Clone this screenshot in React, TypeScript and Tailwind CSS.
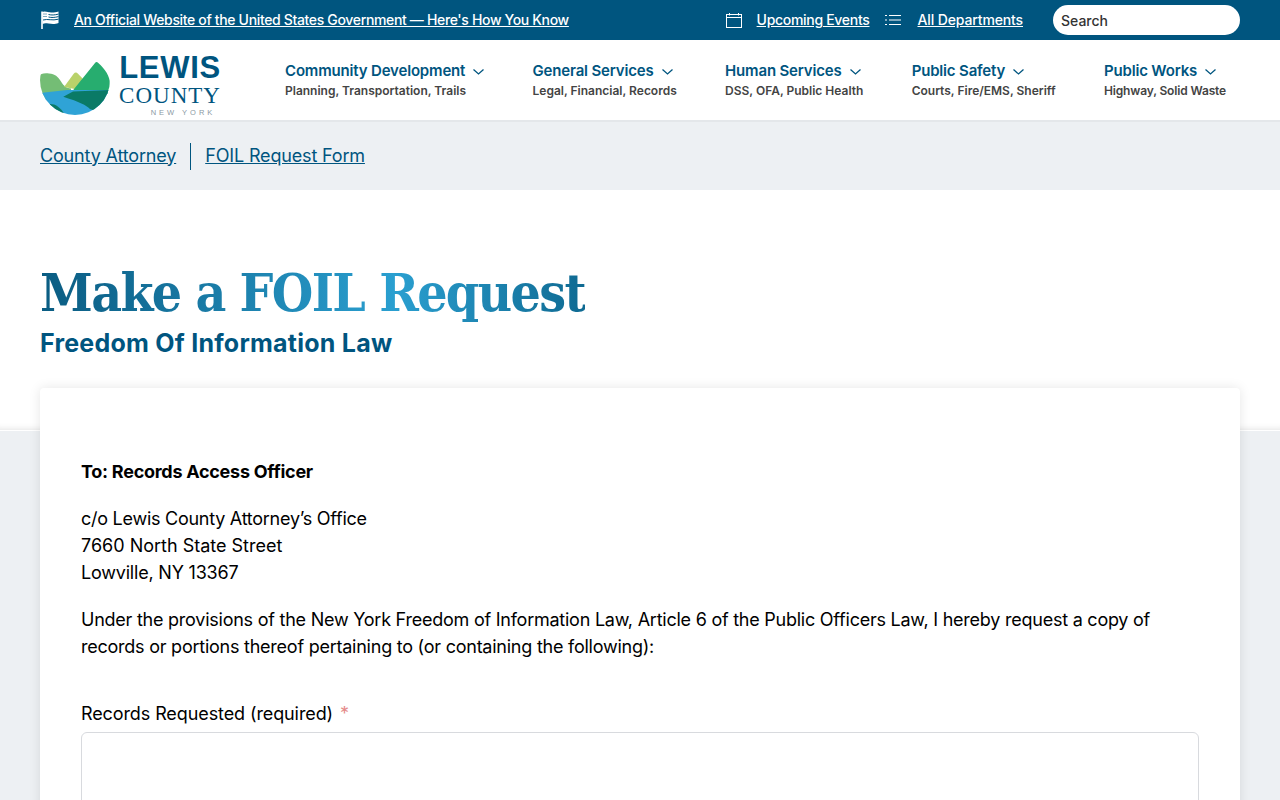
const sans = { fontFamily: "Inter, 'Noto Sans', sans-serif" };

const navItems = [
    { title: "Community Development", sub: "Planning, Transportation, Trails", subClass: "" },
    { title: "General Services", sub: "Legal, Financial, Records", subClass: "" },
    { title: "Human Services", sub: "DSS, OFA, Public Health", subClass: "" },
    { title: "Public Safety", sub: "Courts, Fire/EMS, Sheriff", subClass: "" },
    { title: "Public Works", sub: "Highway, Solid Waste", subClass: "tracking-[-0.15px]" },
];

function FlagIcon() {
    return (
        <svg width="20" height="20" viewBox="0 0 20 20" fill="none" stroke="white">
            <path d="M2 1.500V19" strokeWidth="1.600" />
            <path d="M2 2c2-1 4-.5 6 0s6 1 10.500-.5V13c-4 1.500-7 1-10 .5s-4-.5-6 .5z" fill="white" stroke="none" />
            <path d="M8.500 4.500c3 .8 6 .6 10-.4M8.500 7c3 .8 6 .6 10-.4M3 10c5-1.500 9 1 15.500-.8" stroke="#00557f" strokeWidth="1" />
            <path d="M3.500 4h4M3.500 6.500h4" stroke="#00557f" strokeWidth="1" strokeDasharray="1 1" />
        </svg>
    );
}

function CalendarIcon() {
    return (
        <svg width="16" height="15" viewBox="0 0 16 15" fill="none" stroke="white" strokeWidth="1">
            <rect x="0.500" y="1.500" width="15" height="13" />
            <path d="M0.500 4.500h15M3.500 0v2.500M12.500 0v2.500" />
        </svg>
    );
}

function ListIcon() {
    return (
        <svg width="16" height="12" viewBox="0 0 16 12" fill="none" stroke="white" strokeWidth="1">
            <path d="M4 1.500h12M4 6h12M4 10.500h12" />
            <path d="M0 1.500h2M0 6h2M0 10.500h2" />
        </svg>
    );
}

function Chevron() {
    return (
        <svg width="11" height="6" viewBox="0 0 11 6" fill="none" stroke="#00557f" strokeWidth="1.300" className="ml-[8px] mt-[2px]">
            <path d="M0.500 0.500 5.500 5l5-4.500" />
        </svg>
    );
}

function LogoMark() {
    return (
        <svg width="70" height="56" viewBox="0 0 70 56">
            <clipPath id="bowl"><circle cx="35" cy="20" r="35" /></clipPath>
            <g clipPath="url(#bowl)">
                <path d="M0 16C0 14 3 13 9 13.500c6 .5 9 3 12 8 3 5 6 6.500 10 7V40H0z" fill="#74bd75" />
                <path d="M24 27 33.500 14c1.500-1.800 3-1.800 4.500-.3L44 20l-4 10z" fill="#b9d26a" />
                <path d="M30 34 55 3c1-1.200 2-1.200 3.300 0C65 9 70 16 70 24v10z" fill="#27ad6f" />
                <path d="M0 33 27 30H70V56H0z" fill="#2fa3d6" />
                <path d="M23.300 36.700 33 31.500 70 30V56L50 49C46 45 40 42 23.300 36.700z" fill="#0a7a66" />
                <path d="M10 44c6 0 10 3 16 12H10z" fill="#0a7a66" />
            </g>
        </svg>
    );
}

function Logo() {
    return (
        <div className="flex items-start">
            <div className="mt-[20px]"><LogoMark /></div>
            <div className="ml-[9px] w-[102px] flex flex-col items-center mt-[12px]">
                <span className="text-[31px] leading-[31px] font-bold text-[#00557f] tracking-[0.7px]" style={{ fontFamily: "'Liberation Sans', sans-serif" }}>LEWIS</span>
                <span className="text-[23px] leading-[24px] mt-[1px] text-[#00557f] tracking-[1px]" style={{ fontFamily: "'Liberation Serif', serif" }}>COUNTY</span>
                <span className="text-[7.500px] leading-[10px] text-[#8a99a3] tracking-[3px] pl-[26px]" style={{ fontFamily: "'Liberation Sans', sans-serif" }}>NEW YORK</span>
            </div>
        </div>
    );
}

export default function App() {
    return (
        <div className="h-[800px] overflow-hidden bg-[#edf0f3]" style={sans}>
            {/* top bar */}
            <div className="h-[40px] bg-[#00557f] flex items-center pl-[40px] pr-[40px] text-white text-[14px] font-medium">
                <FlagIcon />
                <a className="underline ml-[14px] mb-[2px] tracking-[-0.34px]">An Official Website of the United States Government — Here's How You Know</a>
                <div className="ml-auto flex items-center">
                    <CalendarIcon />
                    <a className="underline ml-[15px] mb-[2px] tracking-[-0.3px]">Upcoming Events</a>
                    <div className="ml-[16px]"><ListIcon /></div>
                    <a className="underline ml-[16px] mb-[2px] tracking-[-0.13px]">All Departments</a>
                    <div className="ml-[30px] w-[187px] h-[30px] bg-white rounded-[15px] pl-[8px] flex items-center text-[#333] text-[14px] font-medium">Search</div>
                </div>
            </div>

            {/* main nav */}
            <div className="h-[82px] bg-white border-b-2 border-[#e4e7ea] flex pl-[40px] pr-[54px]">
                <Logo />
                <div className="ml-auto w-[941px] flex justify-between pt-[22px]">
                    {navItems.map((item) => (
                        <div key={item.title}>
                            <div className="flex items-center text-[15px] leading-[18px] font-semibold text-[#00557f] tracking-[-0.17px]">
                                {item.title}
                                <Chevron />
                            </div>
                            <div className={`text-[12px] leading-[16px] mt-[3px] font-semibold text-[#444] ${item.subClass}`}>{item.sub}</div>
                        </div>
                    ))}
                </div>
            </div>

            {/* breadcrumb */}
            <div className="h-[68px] bg-[#edf0f3] flex items-center pl-[40px] text-[18px] text-[#00557f] tracking-[-0.16px]">
                <a className="underline mb-[2px]">County Attorney</a>
                <div className="w-px h-[27px] bg-[#00557f] ml-[14px] mr-[14px]"></div>
                <a className="underline mb-[2px]">FOIL Request Form</a>
            </div>

            {/* heading */}
            <div className="h-[241px] bg-white border-b border-white shadow-[inset_0_-7px_7px_-7px_rgba(0,0,0,0.14)] pl-[40px] pt-[70px]">
                <h1
                    className="inline-block text-[53px] leading-[64px] font-bold tracking-[-1.65px] text-transparent bg-clip-text bg-gradient-to-r from-[#0a5c82] via-[#2a9fd0] via-65% to-[#0f6a92]"
                    style={{ fontFamily: "'DejaVu Serif Condensed', 'DejaVu Serif', serif" }}
                >
                    Make a FOIL Request
                </h1>
                <div className="text-[25px] leading-[30px] font-bold text-[#00557f] mt-[4px] tracking-[0.24px]">Freedom Of Information Law</div>
            </div>

            {/* form card */}
            <div className="relative mx-[40px] -mt-[43px] h-[600px] bg-white rounded-[4px] shadow-[0_0_12px_rgba(0,0,0,0.1)] px-[41px] pt-[70px] text-[18px] leading-[27px] text-black">
                <p className="font-bold tracking-[-0.27px]">To: Records Access Officer</p>
                <p className="mt-[20px]">
                    <span className="tracking-[-0.26px]">c/o Lewis County Attorney’s Office</span><br />
                    7660 North State Street<br />
                    <span className="tracking-[-0.2px]">Lowville, NY 13367</span>
                </p>
                <p className="mt-[20px] tracking-[-0.24px]">Under the provisions of the New York Freedom of Information Law, Article 6 of the Public Officers Law, I hereby request a copy of records or portions thereof pertaining to (or containing the following):</p>
                <label className="block mt-[40px] tracking-[-0.1px]">Records Requested (required)<span className="text-[#e58a8a] ml-[7px]">*</span></label>
                <div className="mt-[5px] h-[200px] border border-[#d8dade] rounded-[6px]"></div>
            </div>
        </div>
    );
}
